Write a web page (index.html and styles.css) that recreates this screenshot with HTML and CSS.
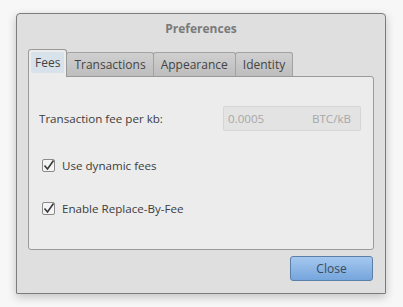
FILE: index.html
```html
<!DOCTYPE html>
<html>
<head>
<meta charset="utf-8">
<link rel="stylesheet" href="styles.css">
</head>
<body>
<div class="window">
  <div class="titlebar">Preferences</div>
  <div class="tabs">
    <div class="tab active"><span class="tab-label">Fees</span></div>
    <div class="tab">Transactions</div>
    <div class="tab">Appearance</div>
    <div class="tab">Identity</div>
  </div>
  <div class="pane">
    <div class="row">
      <span class="label">Transaction fee per kb:</span>
      <div class="input"><span>0.0005</span><span>BTC/kB</span></div>
    </div>
    <div class="check-row first">
      <span class="box"><svg width="13" height="13" viewBox="0 0 13 13"><path d="M2.5 6.5 L5.5 10 L11.5 1.5" fill="none" stroke="#3a3a3a" stroke-width="1.6"/></svg></span>
      <span>Use dynamic fees</span>
    </div>
    <div class="check-row">
      <span class="box"><svg width="13" height="13" viewBox="0 0 13 13"><path d="M2.5 6.5 L5.5 10 L11.5 1.5" fill="none" stroke="#3a3a3a" stroke-width="1.6"/></svg></span>
      <span>Enable Replace-By-Fee</span>
    </div>
  </div>
  <div class="buttons">
    <div class="button">Close</div>
  </div>
</div>
</body>
</html>
```
FILE: styles.css
```css
html, body {
  margin: 0;
  padding: 0;
}
body {
  background: #f7f7f7;
  font-family: "Open Sans", "DejaVu Sans", sans-serif;
  font-size: 11.6px;
  color: #3c3c3c;
  width: 403px;
  height: 307px;
  overflow: hidden;
}
.window {
  margin: 13px 0 0 16px;
  width: 368px;
  height: 279px;
  border: 1px solid #7c7c7c;
  border-radius: 4px 4px 1px 1px;
  background: #dfdfdf;
  box-shadow: 0 3px 10px rgba(0,0,0,0.22);
  display: flex;
  flex-direction: column;
}
.titlebar {
  height: 28px;
  display: flex;
  align-items: center;
  justify-content: center;
  font-weight: bold;
  color: #7a7a7a;
  font-size: 12px;
}
.tabs {
  display: flex;
  align-items: flex-end;
  margin-left: 11px;
  height: 27px;
  margin-top: 7px;
  font-size: 12px;
}
.tab {
  height: 23px;
  padding: 0 7px;
  display: flex;
  align-items: center;
  border: 1px solid #a2a2a2;
  border-bottom: none;
  border-radius: 3px 3px 0 0;
  background: linear-gradient(#d0d0d0, #bdbdbd);
  color: #444;
  margin-left: -1px;
}
.tab.active {
  height: 27px;
  margin-left: 0;
  background: #ececec;
  border-color: #9a9a9a;
  padding: 0 2px;
  align-items: flex-start;
  position: relative;
  z-index: 1;
  margin-bottom: -1px;
}
.tab-label {
  margin-top: 2px;
  padding: 0 4px;
  height: 21px;
  line-height: 21px;
  background: #d8e2ea;
  border-radius: 2px;
}
.pane {
  margin: 0 11px;
  height: 172px;
  background: #ececec;
  border: 1px solid #9a9a9a;
  border-radius: 0 3px 3px 3px;
  display: flex;
  flex-direction: column;
}
.row {
  display: flex;
  align-items: center;
  justify-content: space-between;
  margin: 29px 12px 0 10px;
}
.input {
  width: 123px;
  height: 23px;
  border: 1px solid #d6d6d6;
  background: #e3e3e3;
  border-radius: 2px;
  display: flex;
  align-items: center;
  justify-content: space-between;
  padding: 0 9px 0 4px;
  color: #a8a8a8;
}
.check-row {
  display: flex;
  align-items: center;
  margin: 28px 0 0 13px;
  gap: 7px;
}
.check-row.first {
  margin-top: 27px;
}
.box {
  width: 11px;
  height: 11px;
  border: 1px solid #8a8a8a;
  border-radius: 2px;
  background: #f4f4f4;
  display: flex;
  align-items: center;
  justify-content: center;
}
.box svg {
  flex: none;
}
.buttons {
  display: flex;
  justify-content: flex-end;
  margin: 6px 12px 0 0;
}
.button {
  width: 81px;
  height: 23px;
  border: 1px solid #5a7fa8;
  border-radius: 3px;
  background: linear-gradient(#a6c8ef, #75a5dc);
  display: flex;
  align-items: center;
  justify-content: center;
  color: #3a4a5a;
  font-size: 12px;
}
```
